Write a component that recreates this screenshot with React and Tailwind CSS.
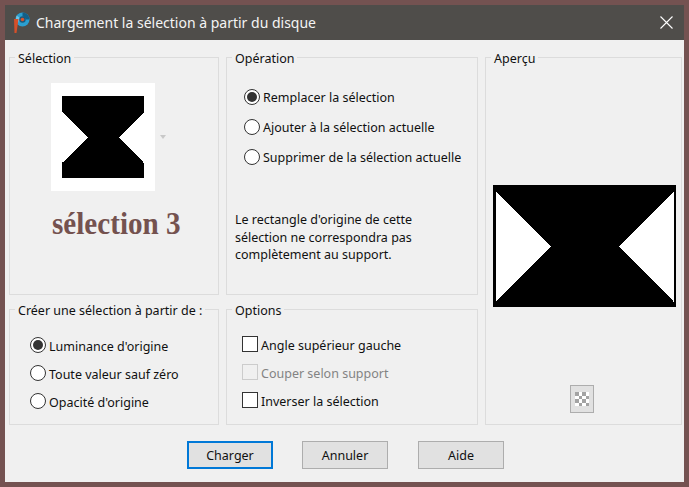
import React from 'react';

const Group = ({ title, className, children }) => (
  <fieldset className={`min-w-0 border border-[#dcdcdc] ${className}`}>
    <legend className="ml-[5px] px-[3px] h-[18px] leading-[22px] text-[12.5px] text-[#101010]">{title}</legend>
    {children}
  </fieldset>
);

const Radio = ({ label, checked, rowClass, labelClass }) => (
  <div className={`flex items-center ${rowClass}`}>
    <span className="w-4 h-4 rounded-full border border-[#333333] bg-white flex items-center justify-center shrink-0">
      {checked && <span className="w-[10px] h-[10px] rounded-full bg-[#333333]" />}
    </span>
    <span className={`ml-[3px] text-[12.5px] text-[#101010] whitespace-nowrap ${labelClass}`}>{label}</span>
  </div>
);

const Check = ({ label, disabled }) => (
  <div className="flex items-center h-7">
    <span className={`w-4 h-4 border shrink-0 ${disabled ? 'border-[#cccccc] bg-[#f0f0f0]' : 'border-[#333333] bg-white'}`} />
    <span className={`ml-[3px] mt-[5px] text-[12.5px] whitespace-nowrap ${disabled ? 'text-[#838383]' : 'text-[#101010]'}`}>{label}</span>
  </div>
);

const Btn = ({ label, primary, className = '' }) => (
  <button className={`w-[86px] h-7 pt-[2px] bg-[#e1e1e1] text-[12.5px] text-[#101010] ${primary ? 'border-2 border-[#0078d7]' : 'border border-[#adadad]'} ${className}`}>
    {label}
  </button>
);

const Logo = () => (
  <svg width="17" height="21" viewBox="0 0 17 21" className="shrink-0">
    <circle cx="9.5" cy="7.5" r="7" fill="#2b9fd0" />
    <path d="M9.5 0.5 A7 7 0 0 1 16.5 7.5 L12.5 7.5 A3 3 0 0 0 9.5 4.5 Z" fill="#135f88" />
    <path d="M3.5 3.5 L7 6 L5 11 L2.5 9 Z" fill="#6fc6e6" />
    <circle cx="9.5" cy="7.5" r="3.2" fill="#1c5a7c" />
    <circle cx="9.5" cy="7.5" r="1.8" fill="#d9532c" />
    <path d="M1 7 L5.5 7 L3.5 21 L1.5 21 Z" fill="#d4502a" />
  </svg>
);

const Checker = () => (
  <svg width="14" height="14" viewBox="0 0 4 4" shapeRendering="crispEdges">
    <rect width="4" height="4" fill="#ffffff" />
    <path d="M0 0h1v1H0zM2 0h1v1H2zM1 1h1v1H1zM3 1h1v1H3zM0 2h1v1H0zM2 2h1v1H2zM1 3h1v1H1zM3 3h1v1H3z" fill="#a3a3a3" />
  </svg>
);

export default function App() {
  return (
    <div className="w-[689px] h-[487px] bg-[#745251] p-[5px] overflow-hidden" style={{ fontFamily: '"Noto Sans", sans-serif' }}>
      <div className="w-[679px] h-[477px] bg-[#f0f0f0] flex flex-col">
        {/* barre de titre */}
        <div className="h-[35px] bg-[#4f4d4a] flex items-center pl-2 pr-[11px] shrink-0">
          <Logo />
          <span className="ml-[6px] text-[14px] text-[#f4f4f4] whitespace-nowrap">Chargement la sélection à partir du disque</span>
          <svg width="13" height="13" viewBox="0 0 13 13" className="ml-auto">
            <path d="M0.5 0.5 L12.5 12.5 M12.5 0.5 L0.5 12.5" stroke="#ffffff" strokeWidth="1.1" fill="none" />
          </svg>
        </div>

        <div className="grid grid-cols-[210px_252px_197px] grid-rows-[247px_125px] gap-x-[7px] gap-y-[5px] pt-2 pl-1">
          <Group title="Sélection">
            <div className="mt-[17px] ml-[41px] flex items-center">
              <div className="w-[104px] h-[108px] bg-white flex items-center justify-center">
                <svg width="82" height="82" viewBox="0 0 82 82" shapeRendering="crispEdges">
                  <path d="M0 0H82V16L57 41.5L82 67V82H0V67L26 41.5L0 16Z" fill="#000000" />
                </svg>
              </div>
              <span className="ml-[5px] w-0 h-0 border-x-[3px] border-x-transparent border-t-[4px] border-t-[#c8c8c8]" />
            </div>
            <div
              className="mt-[11px] ml-[42px] text-[32px] leading-[42px] font-bold text-[#74524f] whitespace-nowrap origin-left scale-x-[0.91]"
              style={{ fontFamily: '"Liberation Serif", serif' }}
            >
              sélection 3
            </div>
          </Group>

          <Group title="Opération">
            <div className="pt-4 pl-[17px]">
              <Radio label="Remplacer la sélection" checked rowClass="h-[30px]" labelClass="mt-[2px]" />
              <Radio label="Ajouter à la sélection actuelle" rowClass="h-[30px]" labelClass="mt-[2px]" />
              <Radio label="Supprimer de la sélection actuelle" rowClass="h-[30px]" labelClass="mt-[2px]" />
              <p className="mt-[39px] -ml-[9px] text-[12.5px] leading-[17.5px] text-[#101010]">
                Le rectangle d'origine de cette<br />
                sélection ne correspondra pas<br />
                complètement au support.
              </p>
            </div>
          </Group>

          <Group title="Aperçu" className="row-span-2">
            <div className="mt-[119px] ml-[7px] w-[183px]">
              <svg width="183" height="122" viewBox="0 0 183 122" shapeRendering="crispEdges" className="block">
                <rect width="183" height="122" fill="#000000" />
                <path d="M3 6L58 61.5L3 117Z" fill="#ffffff" />
                <path d="M181 6L126 61.5L181 117Z" fill="#ffffff" />
              </svg>
            </div>
            <div className="mt-[78px] ml-[84px] w-6 h-7 bg-[#e1e1e1] border border-[#adadad] flex items-center justify-center">
              <Checker />
            </div>
          </Group>

          <Group title="Créer une sélection à partir de :">
            <div className="pt-[13px] pl-5">
              <Radio label="Luminance d'origine" checked rowClass="h-7" labelClass="mt-1" />
              <Radio label="Toute valeur sauf zéro" rowClass="h-7" labelClass="mt-1" />
              <Radio label="Opacité d'origine" rowClass="h-7" labelClass="mt-1" />
            </div>
          </Group>

          <Group title="Options">
            <div className="pt-3 pl-[15px]">
              <Check label="Angle supérieur gauche" />
              <Check label="Couper selon support" disabled />
              <Check label="Inverser la sélection" />
            </div>
          </Group>
        </div>

        <div className="mt-4 pl-[182px] flex gap-[29px]">
          <Btn label="Charger" primary />
          <Btn label="Annuler" />
          <Btn label="Aide" className="ml-px" />
        </div>
      </div>
    </div>
  );
}
